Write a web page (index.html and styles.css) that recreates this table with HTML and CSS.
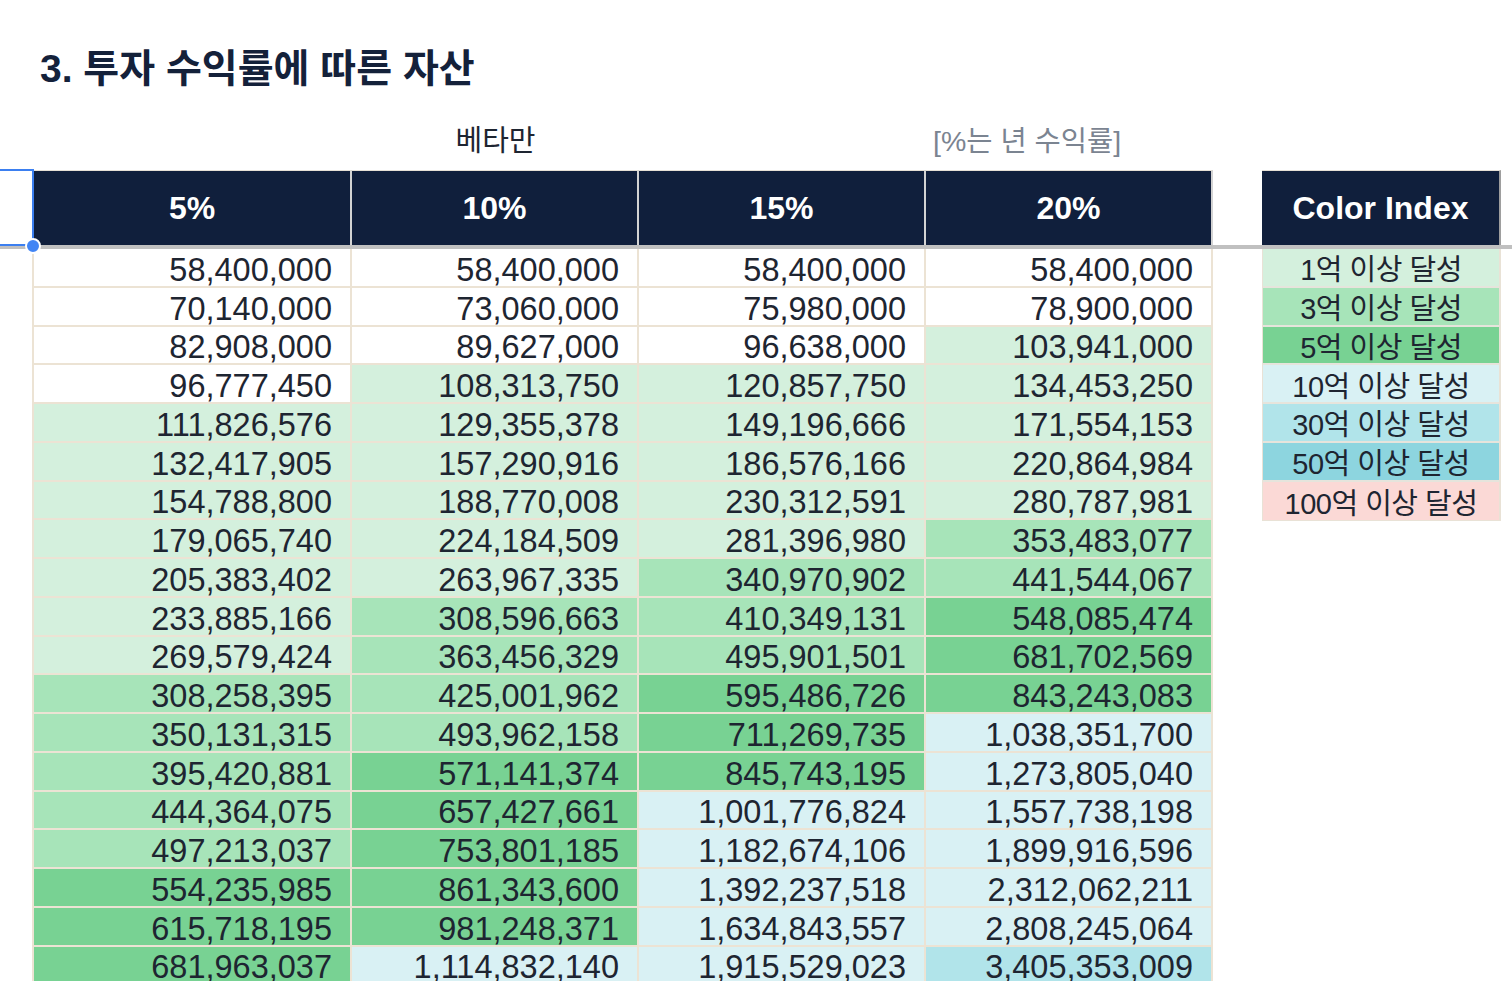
FILE: index.html
```html
<!DOCTYPE html>
<html lang="ko">
<head>
<meta charset="utf-8">
<title>투자 수익률에 따른 자산</title>
<link rel="stylesheet" href="styles.css">
</head>
<body>
<div class="sheet">
  <h1 class="title">3. 투자 수익률에 따른 자산</h1>

  <div class="caption">
    <div class="cap-spacer"></div>
    <div class="cap-mid">베타만</div>
    <div class="cap-blank"></div>
    <div class="cap-note">[%는 년 수익률]</div>
  </div>

  <div class="head">
    <div class="sel"><span class="handle"></span></div>
    <div class="hcell w1">5%</div>
    <div class="hcell w2">10%</div>
    <div class="hcell w2">15%</div>
    <div class="hcell w2">20%</div>
    <div class="hgap"></div>
    <div class="hcell legend-head">Color Index</div>
    <div class="hrest"></div>
  </div>

  <div class="body">
    <div class="lspace"></div>
    <div class="grid">
      <div class="cell c0">58,400,000</div><div class="cell c0">58,400,000</div><div class="cell c0">58,400,000</div><div class="cell c0">58,400,000</div>
      <div class="cell c0">70,140,000</div><div class="cell c0">73,060,000</div><div class="cell c0">75,980,000</div><div class="cell c0">78,900,000</div>
      <div class="cell c0">82,908,000</div><div class="cell c0">89,627,000</div><div class="cell c0">96,638,000</div><div class="cell c1">103,941,000</div>
      <div class="cell c0">96,777,450</div><div class="cell c1">108,313,750</div><div class="cell c1">120,857,750</div><div class="cell c1">134,453,250</div>
      <div class="cell c1">111,826,576</div><div class="cell c1">129,355,378</div><div class="cell c1">149,196,666</div><div class="cell c1">171,554,153</div>
      <div class="cell c1">132,417,905</div><div class="cell c1">157,290,916</div><div class="cell c1">186,576,166</div><div class="cell c1">220,864,984</div>
      <div class="cell c1">154,788,800</div><div class="cell c1">188,770,008</div><div class="cell c1">230,312,591</div><div class="cell c1">280,787,981</div>
      <div class="cell c1">179,065,740</div><div class="cell c1">224,184,509</div><div class="cell c1">281,396,980</div><div class="cell c2">353,483,077</div>
      <div class="cell c1">205,383,402</div><div class="cell c1">263,967,335</div><div class="cell c2">340,970,902</div><div class="cell c2">441,544,067</div>
      <div class="cell c1">233,885,166</div><div class="cell c2">308,596,663</div><div class="cell c2">410,349,131</div><div class="cell c3">548,085,474</div>
      <div class="cell c1">269,579,424</div><div class="cell c2">363,456,329</div><div class="cell c2">495,901,501</div><div class="cell c3">681,702,569</div>
      <div class="cell c2">308,258,395</div><div class="cell c2">425,001,962</div><div class="cell c3">595,486,726</div><div class="cell c3">843,243,083</div>
      <div class="cell c2">350,131,315</div><div class="cell c2">493,962,158</div><div class="cell c3">711,269,735</div><div class="cell c4">1,038,351,700</div>
      <div class="cell c2">395,420,881</div><div class="cell c3">571,141,374</div><div class="cell c3">845,743,195</div><div class="cell c4">1,273,805,040</div>
      <div class="cell c2">444,364,075</div><div class="cell c3">657,427,661</div><div class="cell c4">1,001,776,824</div><div class="cell c4">1,557,738,198</div>
      <div class="cell c2">497,213,037</div><div class="cell c3">753,801,185</div><div class="cell c4">1,182,674,106</div><div class="cell c4">1,899,916,596</div>
      <div class="cell c3">554,235,985</div><div class="cell c3">861,343,600</div><div class="cell c4">1,392,237,518</div><div class="cell c4">2,312,062,211</div>
      <div class="cell c3">615,718,195</div><div class="cell c3">981,248,371</div><div class="cell c4">1,634,843,557</div><div class="cell c4">2,808,245,064</div>
      <div class="cell c3">681,963,037</div><div class="cell c4">1,114,832,140</div><div class="cell c4">1,915,529,023</div><div class="cell c5">3,405,353,009</div>
    </div>
    <div class="legend">
      <div class="lrow c1">1억 이상 달성</div>
      <div class="lrow c2">3억 이상 달성</div>
      <div class="lrow c3">5억 이상 달성</div>
      <div class="lrow c4">10억 이상 달성</div>
      <div class="lrow c5">30억 이상 달성</div>
      <div class="lrow c6">50억 이상 달성</div>
      <div class="lrow c7">100억 이상 달성</div>
    </div>
  </div>
</div>
</body>
</html>
```

FILE: styles.css
```css
html, body {
  margin: 0;
  padding: 0;
  background: #ffffff;
}

.sheet {
  width: 1512px;
  height: 981px;
  overflow: hidden;
  font-family: "Liberation Sans", "Noto Sans CJK KR", sans-serif;
  color: #1e2531;
}

.title {
  margin: 45px 0 0 40px;
  height: 48px;
  line-height: 48px;
  font-size: 39px;
  font-weight: 700;
  color: #14213a;
  white-space: nowrap;
}

.caption {
  display: flex;
  height: 77px;
  padding-top: 21px;
  box-sizing: border-box;
  line-height: 54px;
}

.cap-spacer { width: 352px; }

.cap-mid {
  width: 287px;
  text-align: center;
  font-size: 29px;
  color: #1e2531;
}

.cap-blank { width: 287px; }

.cap-note {
  padding-left: 7px;
  font-size: 28.5px;
  color: #7b8491;
  white-space: nowrap;
}

.head {
  display: flex;
  height: 79px;
  border-bottom: 4px solid #c0c0c0;
  box-sizing: border-box;
}

.sel {
  position: relative;
  width: 34px;
  height: 77px;
  margin-top: -1px;
  box-sizing: border-box;
  border: 2px solid #3b7ff0;
  border-left: none;
}

.handle {
  position: absolute;
  right: -9px;
  bottom: -10px;
  width: 16px;
  height: 16px;
  box-sizing: border-box;
  border-radius: 50%;
  background: #4285f4;
  border: 2px solid #ffffff;
  z-index: 2;
}

.hcell {
  height: 75px;
  box-sizing: border-box;
  display: flex;
  align-items: center;
  justify-content: center;
  background: #101f3c;
  color: #ffffff;
  font-size: 32px;
  font-weight: 700;
  border-top: 1px solid #e6e0d6;
  border-right: 2px solid #d3d3d3;
}

.w1 { width: 318px; }
.w2 { width: 287px; }

.hgap { width: 49px; }

.legend-head {
  width: 239px;
  border-right: 2px solid #9e9e9e;
}

.hrest { flex: 1; }

.body {
  display: flex;
  align-items: flex-start;
}

.lspace { width: 32px; }

.grid {
  display: grid;
  grid-template-columns: 318px 287px 287px 287px;
  grid-auto-rows: 38.75px;
  border-left: 2px solid #ece3d4;
}

.cell {
  box-sizing: border-box;
  display: flex;
  align-items: center;
  justify-content: flex-end;
  padding: 6px 18px 0 0;
  font-size: 32.5px;
  white-space: nowrap;
  border-right: 2px solid #ece3d4;
  border-bottom: 2px solid #ece3d4;
}

.legend {
  margin-left: 49px;
  width: 239px;
  box-sizing: border-box;
  border-left: 1px solid #e9e2d6;
  border-right: 2px solid #e9e2d6;
  border-bottom: 1px solid #e9e2d6;
}

.lrow {
  height: 38.75px;
  box-sizing: border-box;
  display: flex;
  align-items: center;
  justify-content: center;
  font-size: 29px;
  letter-spacing: -0.5px;
  white-space: nowrap;
  border-bottom: 2px solid #e6e4dc;
}

.lrow:last-child { border-bottom: none; }

.c0 { background: #ffffff; }
.c1 { background: #d4f0dd; }
.c2 { background: #a7e4b9; }
.c3 { background: #78d293; }
.c4 { background: #d9f1f4; }
.c5 { background: #b1e4ea; }
.c6 { background: #8dd5df; }
.c7 { background: #fbd9d6; }
```
